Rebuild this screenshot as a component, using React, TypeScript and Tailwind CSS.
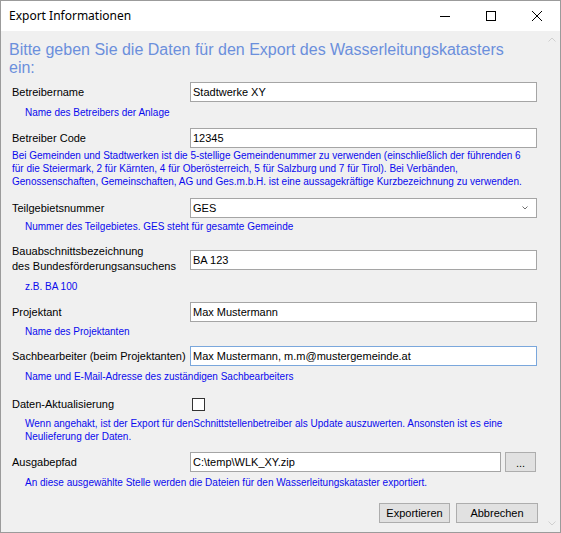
import React from "react";

const hint = "text-[10px] leading-[13px] text-[#0a0aee] whitespace-nowrap";
const label = "w-[178px] shrink-0 text-[11px] leading-[13px] text-black";
const box =
  "h-[20px] w-[347px] border border-[#a5a5a5] bg-white px-[2px] text-[11px] leading-[18px] text-black flex items-center";

function Field({ value, focused }: { value: string; focused?: boolean }) {
  return (
    <div className={focused ? box.replace("border-[#a5a5a5]", "border-[#7aa7dc]") : box}>
      <span className="whitespace-nowrap">{value}</span>
    </div>
  );
}

function Row({ text, children, className }: { text: string; children: React.ReactNode; className: string }) {
  return (
    <div className={`flex items-center ${className}`}>
      <div className={label}>{text}</div>
      {children}
    </div>
  );
}

function Btn({ children, className }: { children: React.ReactNode; className: string }) {
  return (
    <div
      className={`flex h-[20px] items-center justify-center border border-[#adadad] bg-[#e1e1e1] text-[11px] text-black ${className}`}
    >
      {children}
    </div>
  );
}

export default function App() {
  return (
    <div
      className="flex h-[533px] w-[561px] flex-col border border-[#9b9b9b] bg-[#f0f0f0]"
      style={{ fontFamily: '"Liberation Sans", Arial, sans-serif' }}
    >
      {/* title bar */}
      <div className="flex h-[30px] shrink-0 items-center bg-white">
        <span className="pl-[8px] text-[12px] text-black" style={{ fontFamily: '"Noto Sans", sans-serif' }}>
          Export Informationen
        </span>
        <div className="ml-auto flex h-full">
          <div className="flex w-[46px] items-center justify-center">
            <svg width="10" height="10" viewBox="0 0 10 10">
              <path d="M0 5.5h10" stroke="#000" strokeWidth="1" />
            </svg>
          </div>
          <div className="flex w-[46px] items-center justify-center">
            <svg width="10" height="10" viewBox="0 0 10 10">
              <rect x="0.5" y="0.5" width="9" height="9" fill="none" stroke="#000" strokeWidth="1" />
            </svg>
          </div>
          <div className="flex w-[46px] items-center justify-center">
            <svg width="10" height="10" viewBox="0 0 10 10">
              <path d="M0 0L10 10M10 0L0 10" stroke="#000" strokeWidth="1" />
            </svg>
          </div>
        </div>
      </div>

      <div className="flex min-h-0 flex-1">
        <div className="flex-1 pl-[11px]">
          <div className="-ml-[3px] pt-[10px] text-[16px] leading-[18px] text-[#6b8fdc] whitespace-nowrap">
            Bitte geben Sie die Daten für den Export des Wasserleitungskatasters
            <br />
            ein:
          </div>

          <Row text="Betreibername" className="mt-[5px]">
            <Field value="Stadtwerke XY" />
          </Row>
          <div className={`${hint} mt-[4px] pl-[13px]`}>Name des Betreibers der Anlage</div>

          <Row text="Betreiber Code" className="mt-[9px]">
            <Field value="12345" />
          </Row>
          <div className={`${hint} mt-[1px]`}>
            Bei Gemeinden und Stadtwerken ist die 5-stellige Gemeindenummer zu verwenden (einschließlich der führenden 6
            <br />
            für die Steiermark, 2 für Kärnten, 4 für Oberösterreich, 5 für Salzburg und 7 für Tirol). Bei Verbänden,
            <br />
            Genossenschaften, Gemeinschaften, AG und Ges.m.b.H. ist eine aussagekräftige Kurzbezeichnung zu verwenden.
          </div>

          <Row text="Teilgebietsnummer" className="mt-[10px]">
            <div className={box}>
              <span>GES</span>
              <svg className="ml-auto mr-[6px]" width="6" height="4" viewBox="0 0 6 4">
                <path d="M0.5 0.5L3 3L5.5 0.5" fill="none" stroke="#707070" strokeWidth="1" />
              </svg>
            </div>
          </Row>
          <div className={`${hint} mt-[2px] pl-[13px]`}>Nummer des Teilgebietes. GES steht für gesamte Gemeinde</div>

          <div className="mt-[11px] flex items-start">
            <div className={`${label} leading-[15px]`}>
              Bauabschnittsbezeichnung
              <br />
              des Bundesförderungsansuchens
            </div>
            <div className="mt-[6px]">
              <Field value="BA 123" />
            </div>
          </div>
          <div className={`${hint} mt-[6px] pl-[13px]`}>z.B. BA 100</div>

          <Row text="Projektant" className="mt-[9px]">
            <Field value="Max Mustermann" />
          </Row>
          <div className={`${hint} mt-[3px] pl-[13px]`}>Name des Projektanten</div>

          <Row text="Sachbearbeiter (beim Projektanten)" className="mt-[8px]">
            <Field value="Max Mustermann, m.m@mustergemeinde.at" focused />
          </Row>
          <div className={`${hint} mt-[4px] pl-[13px]`}>Name und E-Mail-Adresse des zuständigen Sachbearbeiters</div>

          <Row text="Daten-Aktualisierung" className="mt-[11px] h-[20px]">
            <div className="ml-[2px] h-[13px] w-[13px] border border-[#333333] bg-white" />
          </Row>
          <div className={`${hint} mt-[3px] pl-[13px]`}>
            Wenn angehakt, ist der Export für denSchnittstellenbetreiber als Update auszuwerten. Ansonsten ist es eine
            <br />
            Neulieferung der Daten.
          </div>

          <Row text="Ausgabepfad" className="mt-[9px]">
            <div className="flex h-[20px] w-[311px] items-center border border-[#a5a5a5] bg-white px-[2px] text-[11px] text-black">
              C:\temp\WLK_XY.zip
            </div>
            <Btn className="ml-[4px] w-[31px] items-end pb-[2px] text-[9px] leading-none">...</Btn>
          </Row>
          <div className={`${hint} mt-[4px] pl-[13px]`}>
            An diese ausgewählte Stelle werden die Dateien für den Wasserleitungskataster exportiert.
          </div>

          <div className="mt-[14px] flex justify-end gap-[6px] pr-[5px]">
            <Btn className="w-[71px]">Exportieren</Btn>
            <Btn className="w-[82px]">Abbrechen</Btn>
          </div>
        </div>

        {/* scrollbar remnant */}
        <div className="flex w-[17px] shrink-0 flex-col justify-between">
          <div className="flex h-[17px] items-center justify-center">
            <svg width="8" height="5" viewBox="0 0 8 5">
              <path d="M0.5 4.5L4 1L7.5 4.5" fill="none" stroke="#d0d0d0" strokeWidth="1" />
            </svg>
          </div>
          <div className="flex h-[17px] items-center justify-center">
            <svg width="8" height="5" viewBox="0 0 8 5">
              <path d="M0.5 0.5L4 4L7.5 0.5" fill="none" stroke="#d0d0d0" strokeWidth="1" />
            </svg>
          </div>
        </div>
      </div>
    </div>
  );
}
